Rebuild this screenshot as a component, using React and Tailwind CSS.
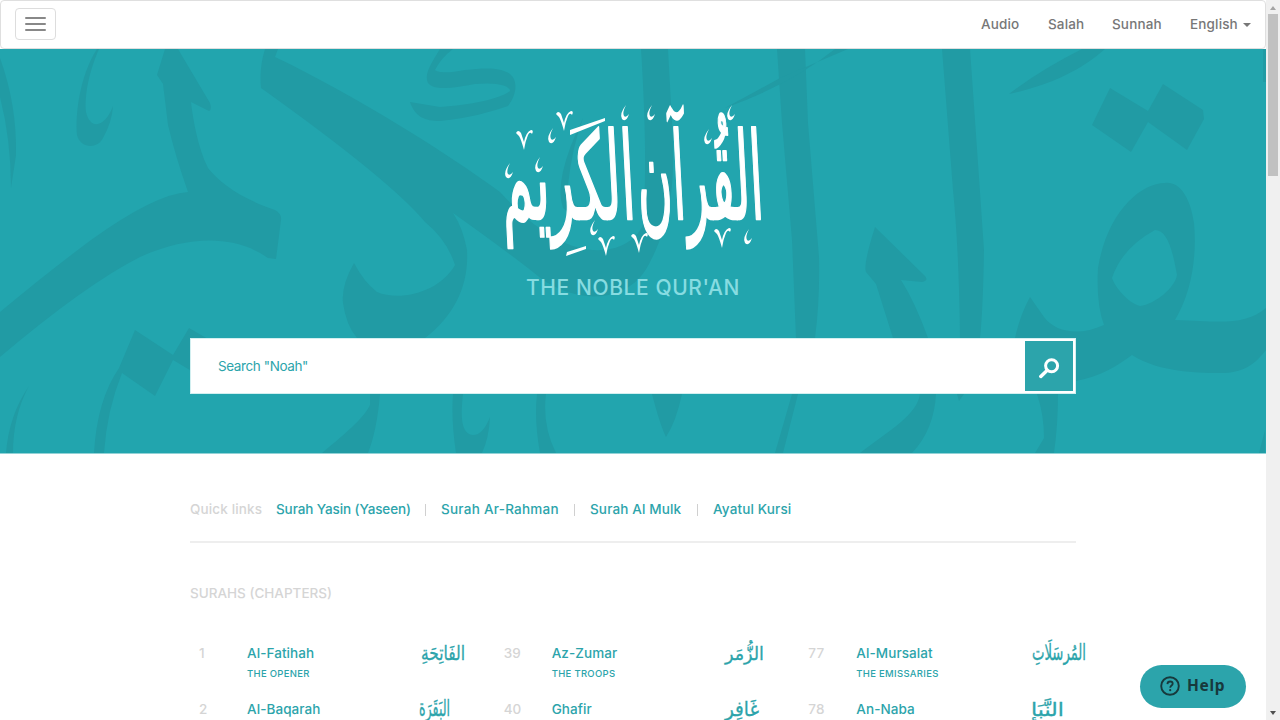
import React from "react";

const surahColumns = [
  [
    { n: 1, name: "Al-Fatihah", meaning: "THE OPENER", ar: "الفَاتِحَةِ", w: 44, mr: "mr-[19px]", scale: 1 },
    { n: 2, name: "Al-Baqarah", ar: "البَقَرَة", w: 31, mr: "mr-[34px]", scale: 1.15 },
  ],
  [
    { n: 39, name: "Az-Zumar", meaning: "THE TROOPS", ar: "الزُّمَر", w: 39, mr: "mr-[24px]", scale: 0.95 },
    { n: 40, name: "Ghafir", ar: "غَافِر", w: 34, mr: "mr-[29px]", scale: 1 },
  ],
  [
    { n: 77, name: "Al-Mursalat", meaning: "THE EMISSARIES", ar: "المُرسَلَاتِ", w: 54, mr: "mr-[7px]", scale: 1.1 },
    { n: 78, name: "An-Naba", ar: "النَّبَإ", w: 33, mr: "mr-[29px]", scale: 0.95 },
  ],
];

function Watermark() {
  return (
    <svg className="absolute inset-0 h-full w-full" viewBox="0 49 1266 404" preserveAspectRatio="none" fill="#219ba4" aria-hidden="true">
      <path d="M0 58Q17 105 16 155L11 188Q11 140 0 97Z" />
      <path d="M97 49C80 75 75 115 77 135C80 148 97 150 103 138Q112 122 113 106C105 128 90 130 86 112C84 90 92 65 99 49Z" />
      <path d="M165 49L157 75L163 84L168 125Q175 155 188 192Q155 194 91 240Q48 272 0 312V357Q85 285 140 257C190 235 235 235 268 258L276 259L281 220Q282 214 275 210C240 198 220 183 208 168C198 148 193 120 191 102L209 111Q212 110 210 103L178 49Z" />
      <path d="M265 49Q259 68 261 88Q390 180 425 222Q447 240 455 265C440 292 400 302 377 292Q364 282 354 263Q341 286 343 303Q346 325 357 338H425C455 315 469 285 467 250Q463 228 453 213Q505 250 533 272C570 305 630 308 651 260C672 220 674 180 673 140L668 49H641Q648 160 643 225C630 253 590 258 555 238Q530 225 500 192C450 155 355 95 275 57L278 49Z" />
      <path d="M370 394H380Q377 430 368 453H322C350 430 365 416 370 405ZM135 330L173 355L189 328L215 343V385L173 360L155 396L122 373Q107 410 104 453H94Q97 400 119 368ZM29 386Q13 415 13 453H6Q9 415 29 386Z" />
      <path d="M440 49C430 65 424 75 428 83C434 91 455 88 475 84C495 82 510 85 510 91C500 99 470 105 440 107L410 102C415 117 425 121 440 121C470 118 490 112 508 106C517 95 518 80 510 74C500 67 485 68 465 70C445 74 437 72 435 70Q441 58 453 49Z" />
      <path d="M583 118Q572 148 568 185Q570 215 600 210Q580 225 563 208Q553 180 583 118Z" />
      <path d="M777 49H805L808 123L819 257Q820 300 815 338H796L792 240L782 123Z" />
      <path d="M725 108Q762 88 780 78L848 49H835Q790 85 725 108Z" />
      <path d="M942 49H970L975 120L984 250Q983 310 980 338H960Q959 250 953 190ZM1009 94Q1040 70 1082 49H1105C1080 71 1050 85 1009 94Z" />
      <path d="M1110 88L1148 111L1163 84L1203 110L1204 119L1187 150L1148 122L1131 152L1092 125Z" />
      <path fillRule="evenodd" d="M1030 297Q1020 315 1015 338H1076V381C1100 377 1120 364 1132 355C1160 373 1200 373 1225 373C1245 372 1256 363 1266 350V308C1245 325 1225 322 1175 320C1192 292 1197 255 1194 223C1190 195 1178 181 1165 183C1140 183 1107 213 1098 268Q1096 304 1104 325C1080 336 1056 333 1044 317ZM1155 230C1166 230 1172 246 1177 275C1175 288 1155 304 1140 306C1128 303 1115 287 1112 278Q1122 248 1155 230Z" />
      <path d="M875 227Q863 265 866 272L876 284L893 338H928Q915 302 901 280L922 282Q929 281 925 276ZM920 394H936Q934 430 912 453H860C890 430 917 415 920 394ZM1037 394H1058Q1058 425 1054 453H1035L1044 438Q1044 415 1037 394Z" />
      <path d="M453 394H463C460 420 462 434 473 435Q483 435 490 417Q489 438 482 453H456Q451 420 453 394ZM537 394H546Q542 425 556 453H540Q534 420 537 394ZM652 394H682Q676 422 666 437Q660 425 652 394ZM792 394H798L783 453H775ZM957 394H964L959 401ZM1259 453L1265 430V453ZM1263 49H1266V82H1263Z" />
    </svg>
  );
}

function NobleQuranMark() {
  const hook = "M3 0Q-4 9 -1 14Q3 18 6 9Q3 13 1 11Q-1 8 3 0Z";
  const tick = "M-7 -5Q-5 -9 -2 -5L1 4Q3 -6 8 -8Q11 -8 9 -4Q7 -7 5 -3Q2 4 1 12Q-2 1 -4 -2Z";
  return (
    <svg className="h-[154px] w-[268px] shrink-0 overflow-visible" viewBox="499 103 268 154" fill="white" role="img" aria-label="القرآن الكريم">
      <g fontFamily="'DejaVu Sans', sans-serif" direction="rtl" textAnchor="middle" stroke="white" strokeWidth="1.2" strokeLinejoin="round">
        <text transform="translate(702 219) skewX(3) scale(1 1.95)" fontSize="62" textLength="126" lengthAdjust="spacingAndGlyphs">القُرآن</text>
        <text transform="translate(570 219) skewX(3) scale(1 1.95)" fontSize="62" textLength="134" lengthAdjust="spacingAndGlyphs">الكريم</text>
      </g>
      {[[550, 128], [649, 105], [706, 129], [537, 157], [507, 163], [592, 220], [623, 105], [729, 105], [746, 229]].map(([x, y]) => (
        <path key={`${x}-${y}`} d={hook} transform={`translate(${x} ${y})`} />
      ))}
      {[[563, 119], [523, 138], [605, 244], [638, 241], [721, 236]].map(([x, y]) => (
        <path key={`${x}-${y}`} d={tick} transform={`translate(${x} ${y})`} />
      ))}
      <path d="M570 130L605 118V121L570 135ZM567 252L586 246V249L566 256Z" />
    </svg>
  );
}

function SurahTitle({ text, width, scale }) {
  return (
    <svg className="h-[24px] overflow-visible" width={width} viewBox={`0 0 ${width} 24`} fill="#2ca4ab" aria-hidden="true">
      <text transform={`translate(${width / 2} 17) scale(1 ${scale})`} textAnchor="middle" direction="rtl" fontFamily="'DejaVu Sans', sans-serif" fontSize="20" stroke="#2ca4ab" strokeWidth="0.3" textLength={width} lengthAdjust="spacingAndGlyphs">
        {text}
      </text>
    </svg>
  );
}

function Surah({ item }) {
  return (
    <div className="flex h-[55.5px] items-start">
      <span className="w-[48px] shrink-0 text-[13.5px] leading-5 font-medium tracking-[0.1px] text-[#d5d5d5]">{item.n}</span>
      <div className="flex-1">
        <div className="text-[13.5px] leading-5 font-medium tracking-[0.08px]">{item.name}</div>
        {item.meaning && <div className="mt-[3px] text-[9.5px] leading-4 font-medium tracking-[0.3px]">{item.meaning}</div>}
      </div>
      <div className={`${item.mr} shrink-0`}>
        <SurahTitle text={item.ar} width={item.w} scale={item.scale} />
      </div>
    </div>
  );
}

const Divider = () => <span className="h-[12px] w-px bg-[#d0d0d0]" />;

export default function App() {
  return (
    <div className="relative flex h-[720px] w-[1280px] overflow-hidden bg-white font-['Inter','Liberation_Sans',sans-serif] text-[#2ca4ab]">
      <div className="flex w-[1266px] flex-col">
        <nav className="flex h-[49px] shrink-0 items-center rounded border border-[#dfdfdf] bg-white px-[14px] pb-px text-[13.5px] font-medium text-[#777]">
          <button className="flex h-[32px] w-[41px] flex-col items-center justify-center gap-[4px] rounded border border-[#ddd]" aria-label="Menu">
            <span className="h-[2px] w-[21px] rounded-sm bg-[#888]" />
            <span className="h-[2px] w-[21px] rounded-sm bg-[#888]" />
            <span className="h-[2px] w-[21px] rounded-sm bg-[#888]" />
          </button>
          <div className="ml-auto flex items-center pt-px tracking-[0.15px]">
            <a className="w-[67px]">Audio</a>
            <a className="w-[64px]">Salah</a>
            <a className="w-[78px]">Sunnah</a>
            <a className="flex w-[61px] items-center justify-between">
              English
              <span className="mt-px h-0 w-0 border-x-4 border-t-4 border-x-transparent border-t-[#777]" />
            </a>
          </div>
        </nav>

        <header className="relative flex h-[405px] shrink-0 flex-col items-center border-b border-[#91d2d6] bg-[#22a5ae]">
          <Watermark />
          <div className="relative flex w-[886px] flex-col items-center pt-[54px]">
            <NobleQuranMark />
            <h1 className="mt-[15px] text-[21px] leading-8 font-medium tracking-[0.6px] whitespace-nowrap text-[#87dce1]">THE NOBLE QUR'AN</h1>
            <form className="mt-[34px] flex h-[56px] w-full items-center justify-between border border-[#d2eff0] bg-white pr-[2px] pl-[27px]">
              <span className="text-[13.5px] tracking-[-0.4px]">Search "Noah"</span>
              <span className="flex h-[50px] w-[48px] items-center justify-center bg-[#2ca4ab]">
                <svg className="mt-[4px] h-[21px] w-[21px]" viewBox="0 0 21 21" fill="none" stroke="white">
                  <circle cx="12.6" cy="7.8" r="6" strokeWidth="3" />
                  <path d="M8 12.5L1.8 18.4" strokeWidth="3.5" strokeLinecap="round" />
                </svg>
              </span>
            </form>
          </div>
        </header>

        <main className="mx-auto w-[886px]">
          <div className="flex h-[89px] items-center border-b-2 border-[#eee] pt-[24px] text-[13.5px] font-medium">
            <span className="w-[86px] tracking-[0.15px] text-[#d5d5d5]">Quick links</span>
            <a className="w-[149px] tracking-[-0.1px]">Surah Yasin (Yaseen)</a>
            <Divider />
            <a className="ml-[15px] w-[133px] tracking-[0.25px]">Surah Ar-Rahman</a>
            <Divider />
            <a className="ml-[15px] w-[107px] tracking-[0.15px]">Surah Al Mulk</a>
            <Divider />
            <a className="ml-[15px] tracking-[0.15px]">Ayatul Kursi</a>
          </div>
          <h2 className="mt-[40px] text-[13.5px] leading-5 font-medium text-[#d5d5d5]">SURAHS (CHAPTERS)</h2>
          <div className="mt-[40px] grid w-[923px] grid-cols-3 pl-[9px]">
            {surahColumns.map((column) => (
              <div key={column[0].n} className="pr-[20px]">
                {column.map((item) => (
                  <Surah key={item.n} item={item} />
                ))}
              </div>
            ))}
          </div>
        </main>
      </div>

      <div className="flex h-full w-[14px] flex-col items-center bg-[#f0f0f0]">
        <span className="mt-[6px] h-0 w-0 border-x-[3.5px] border-b-4 border-x-transparent border-b-[#a3a3a3]" />
        <span className="mt-[4px] h-[162px] w-[10px] bg-[#c1c1c1]" />
        <span className="mt-auto mb-[5px] h-0 w-0 border-x-[3.5px] border-t-4 border-x-transparent border-t-[#505050]" />
      </div>

      <button className="absolute top-[665px] left-[1140px] flex h-[43px] w-[106px] items-center rounded-full bg-[#2ca4ab] pb-px pl-[20px] text-[#17393c]">
        <svg className="h-[20px] w-[20px]" viewBox="0 0 20 20" fill="none" stroke="currentColor">
          <circle cx="10" cy="10" r="8.8" strokeWidth="1.9" />
          <path d="M7.4 8.1C7.5 6.4 8.6 5.5 10.1 5.5C11.6 5.5 12.7 6.4 12.7 7.7C12.7 9.4 10.2 9.7 10.2 11.7" strokeWidth="1.8" />
          <circle cx="10.2" cy="14.2" r="1.1" fill="currentColor" stroke="none" />
        </svg>
        <span className="ml-[7px] font-['Noto_Sans',sans-serif] text-[15.5px] font-bold tracking-[0.7px]">Help</span>
      </button>
    </div>
  );
}
